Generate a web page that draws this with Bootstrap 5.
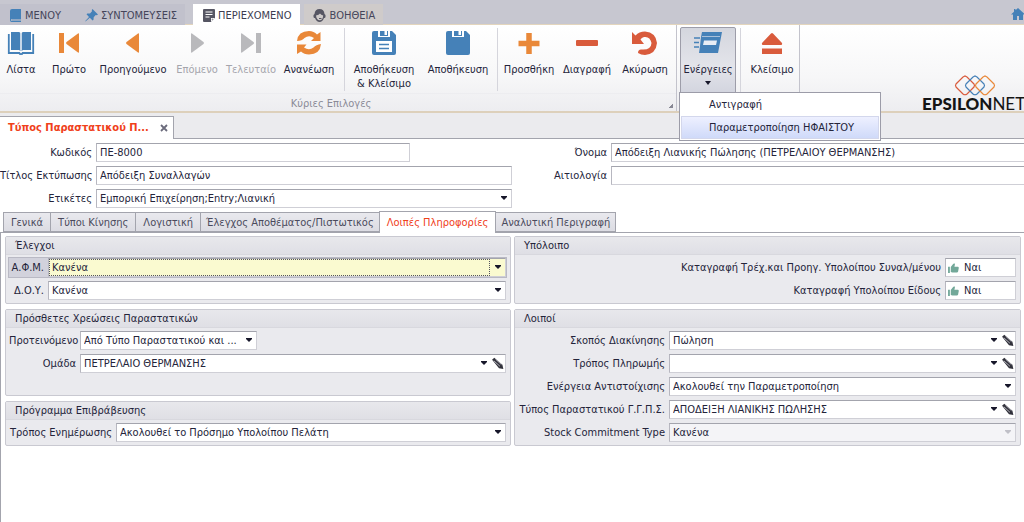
<!DOCTYPE html>
<html lang="el">
<head>
<meta charset="utf-8">
<meta name="viewport" content="width=device-width, initial-scale=1">
<title>Τύπος Παραστατικού</title>
<link href="https://cdn.jsdelivr.net/npm/bootstrap@5.3.0/dist/css/bootstrap.min.css" rel="stylesheet">
<script src="https://cdn.jsdelivr.net/npm/bootstrap@5.3.0/dist/js/bootstrap.bundle.min.js"></script>
<style>
:root { --ink:#24243a; --line:#a3a4ad; --soft:#cfcfd6; }
body { font-family:"DejaVu Sans Condensed","DejaVu Sans",sans-serif; font-size:11px; line-height:14px; color:var(--ink); background:#fff; overflow-x:hidden; }
button { font:inherit; color:inherit; }

/* top strip */
.topstrip { background:#c7c7d0; height:25px; border-bottom:1px solid #e3d5bd; }
.topstrip .nav-link { display:flex; align-items:center; height:21px; margin-top:4px; padding:2px 8px 0 9px; color:#45455a; gap:3px; border-radius:0; }
.topstrip .nav-link.active { background:#fff; height:22px; padding:1px 9px 0 10px; color:#3c3c50; }
.topstrip .warm { background:#cfcbca; }
.topstrip .cool { background:#c1c1cc; }
.home-link { height:24px; width:13px; padding-top:7px; overflow:hidden; }

/* ribbon */
.ribbon { height:88px; background:linear-gradient(#fff,#f7f7f8 60%,#ededf0); border-bottom:2px solid #ddd0bb; }
.ribbon-group { border-right:1px solid #c3c3cc; }
.ribbon-btn { background:none; border:0; padding:5px 0 0; display:flex; flex-direction:column; align-items:center; line-height:14px; white-space:nowrap; }
.ribbon-btn svg { width:28px; height:26px; margin-bottom:7px; flex:none; }
.ribbon-btn:disabled { color:#a5a5ac; }
.w-a { width:42px; } .w-b { width:54px; } .w-c { width:62px; } .w-d { width:74px; }
.ribbon-sep { width:1px; margin:3px 2px 2px; background:#d5d5dc; }
.ribbon-caption { height:18px; color:#8b8b97; border-top:1px solid #ededf0; text-align:center; line-height:19px; position:relative; padding-right:14px; }
.corner-mark { position:absolute; right:3px; bottom:3px; width:4px; height:4px; background:linear-gradient(135deg,transparent 50%,#888894 50%); }
.action-btn { width:56px; height:66px; margin:2px 0 0 3px; padding-top:2px; border:1px solid #9d9da9; border-radius:2px 2px 0 0; background:linear-gradient(#d4d6de,#e3e4ea 60%,#d3d5df); }
.caret { width:0; height:0; border:3px solid transparent; border-top:4px solid #17172a; border-bottom:0; margin-top:4px; }
.action-menu { top:67px; left:2px; min-width:202px; padding:1px; margin:0; border:1px solid #9c9ca8; border-radius:0; font-size:11px; background:#fff; }
.action-menu .dropdown-item { height:22px; padding:4px 12px 4px 28px; line-height:14px; color:var(--ink); }
.action-menu .dropdown-item.active { height:23px; background:linear-gradient(#eef0ff,#cfdaf9); border:1px solid #d3d7ec; padding-left:27px; }
.brand { width:102px; font:17px/14px Lato,sans-serif; color:#151515; white-space:nowrap; }
.brand b { font-weight:900; }
.brand svg { display:block; margin-left:31px; }

/* document tabs */
.docstrip { height:26px; background:#ebebee; border-bottom:1px solid var(--line); padding-top:3px; }
.doctab { width:174px; height:23px; background:#fff; border:1px solid var(--line); border-width:1px 1px 0 0; padding:0 3px 0 8px; color:#f0401a; font-weight:bold; }
.doctab button { border:0; background:none; padding:0; width:10px; line-height:1; }
.doctab svg { display:block; }

/* fields */
.field { display:flex; align-items:center; height:19px; }
.field > label { flex:none; text-align:right; padding-right:4px; white-space:nowrap; }
.box { flex:1 1 0; min-width:0; display:flex; align-items:center; height:19px; background:#fff; border:1px solid var(--soft); border-top-color:var(--line); border-left-color:#b7b7c0; }
.box input, .box select { flex:1 1 0; min-width:0; width:100%; height:17px; min-height:0; padding:0 3px; border:0; border-radius:0; font-size:11px; line-height:17px; color:var(--ink); background-color:transparent; box-shadow:none; }
.box select { background-image:url("data:image/svg+xml,%3Csvg xmlns='http://www.w3.org/2000/svg' viewBox='0 0 6 4'%3E%3Cpath d='M0 0h6v1L3 4 0 1z' fill='%2317172a'/%3E%3C/svg%3E"); background-size:6px 4px; background-position:right 4px top 6px; padding-right:16px; }
.box select:disabled { opacity:1; background-color:#f4f4f7; background-image:url("data:image/svg+xml,%3Csvg xmlns='http://www.w3.org/2000/svg' viewBox='0 0 6 4'%3E%3Cpath d='M0 0h6v1L3 4 0 1z' fill='%23c0c0c8'/%3E%3C/svg%3E"); }
.edit-btn { border:0; background:none; padding:0; width:14px; height:14px; flex:none; }
.edit-btn svg { display:block; }
.focus-row { background:#d2d2dc; outline:1px solid #b9b9c4; outline-offset:0; }
.focus-row .box { background:#fafad0; position:relative; }
.focus-row .box::before { content:""; position:absolute; inset:0 15px 0 0; border:1px dotted #55555f; pointer-events:none; }
.yesno { width:71px; height:19px; background:#fff; border:1px solid var(--soft); border-top-color:var(--line); border-left-color:#b7b7c0; padding:0 2px; display:flex; align-items:center; gap:5px; }

.head-form { padding:4px 0; }
.head-form .l1 { width:96px; } .head-form .l2 { width:99px; }
.stack4 { display:flex; flex-direction:column; gap:4px; }
.name-box { border-right:0; }
.code-field { width:80%; }

/* page tabs */
.pagetabs { padding-left:3px; height:21px; align-items:flex-end; border-bottom:1px solid var(--line); flex-wrap:nowrap; }
.pagetabs .nav-link { height:20px; padding:3px 7px 0; line-height:14px; color:#4a4a5c; border:1px solid var(--line); border-radius:0; margin:0 -1px 0 0; background:linear-gradient(#e9e9ee,#dcdce3); white-space:nowrap; }
.pagetabs .nav-link.tight { padding-left:5px; padding-right:5px; }
.pagetabs .nav-link.active { background:#fff; color:#f0401a; height:22px; border-bottom:0; margin-bottom:-1px; padding-top:4px; }
.page-body { padding:3px 3px 3px 4px; border-left:1px solid var(--line); }
.panels { display:grid; grid-template-columns:506fr 507fr; gap:3px; }
.stack5 { display:flex; flex-direction:column; gap:5px; }
.group { border:1px solid #c9c9d1; border-radius:2px; background:#eaeaee; }
.group h2 { font-size:11px; line-height:14px; height:18px; margin:0; padding:2px 9px; font-weight:normal; background:linear-gradient(#e8e8ec,#dfdfe5); border-bottom:1px solid #d8d8de; }
.group .rows { padding:3px 4px 3px 3px; display:flex; flex-direction:column; gap:4px; }
.k1 { width:39px; } .k2 { width:71px; } .k3 { width:107px; } .k4 { width:151px; }
.short-box { flex:none; width:177px; }
</style>
</head>
<body class="d-flex flex-column min-vh-100">
<svg class="d-none" aria-hidden="true">
  <symbol id="pencil" viewBox="0 0 12 12"><path d="M1 2.500 3 .8l7.500 6.400.9 3.800-4-.7z" fill="#30303a"/><path d="m2.600 3.500 5.600 5M4.200 2l5.400 5" stroke="#c9c9d0" stroke-width=".8"/></symbol>
  <symbol id="thumb" viewBox="0 0 12 11"><path d="M0 4h2v7H0z" fill="#72a899"/><path d="M3 4.500 5.600 1 7 .4l.6 1L7 4h4q1 .3.8 1.500L11 9.600q-.4.9-1.200.9H4.800L3 9.800z" fill="#72a899"/></symbol>
</svg>

<header>
  <nav class="topstrip d-flex">
    <a class="nav-link cool" href="#"><svg width="13" height="13" viewBox="0 0 13 13"><path d="M3 0h9v10H3q-1 .2-1 1t1 1h9v1H2.500Q1 13 1 11V2q0-2 2-2z" fill="#4581b8"/><path d="M3 11h9" stroke="#4581b8" stroke-width=".8"/></svg>ΜΕΝΟΥ</a>
    <a class="nav-link cool ps-3" href="#"><svg width="13" height="13" viewBox="0 0 13 13"><path d="M7.500 0 13 5.500 11.800 6.200 10.700 6 8.700 8.200 8.500 10.800 7.600 11.500 4.800 8.800.500 12.500.300 12 4 8 1.500 5.300 2.300 4.500 5 4.400 7 2.300 6.800 1z" fill="#4581b8"/></svg>ΣΥΝΤΟΜΕΥΣΕΙΣ</a>
    <a class="nav-link active ms-2 me-1" href="#" aria-current="page"><svg width="12" height="13" viewBox="0 0 12 13"><path d="M1 0h10q1 0 1 1v8l-4 4H1q-1 0-1-1V1q0-1 1-1z" fill="#565663"/><path d="M2.500 3h7M2.500 5.500h7M2.500 8h4" stroke="#fff" fill="none"/><path d="M8 13V9h4z" fill="#fff"/><path d="M8.800 11.300V9.800h1.600z" fill="#565663"/></svg>ΠΕΡΙΕΧΟΜΕΝΟ</a>
    <a class="nav-link warm" href="#"><svg width="13" height="13" viewBox="0 0 13 13"><path d="M6.500 0Q11 0 11.500 5q1.500.5 1 3-.3 1.300-1.500 1Q9.500 13 6.500 13T2 9Q.800 9.300.500 8q-.5-2.500 1-3Q2 0 6.500 0z" fill="#565663"/><path d="M3 6.500Q6 6 7 4.500q1 1.700 3.200 2Q10 11 6.700 11.300 3.500 11 3 6.500z" fill="#cfcbca"/><path d="M6 9.500h2.500" stroke="#565663"/></svg>ΒΟΗΘΕΙΑ</a>
    <a class="home-link ms-auto" href="#" aria-label="Αρχική"><svg width="14" height="13" viewBox="0 0 14 13"><path d="m7 0 7 6.500h-2V12H8V8H6v4H2V6.500H0L3 3.700V1h1.500v1.300z" fill="#4581b8"/></svg></a>
  </nav>

  <div class="ribbon d-flex">
    <section class="ribbon-group d-flex flex-column flex-shrink-0">
      <div class="d-flex flex-grow-1">
        <button class="ribbon-btn w-a"><svg viewBox="0 0 28 26"><path d="M4 2h8q1.300.2 1.500 1.500V21L12 20H4zM24 2h-8q-1.300.2-1.500 1.500V21l1.500-1h8z" fill="#4581b8"/><path d="M1.800 4v19h10.500q.2 1.200 1.700 1.200t1.700-1.200h10.500V4" fill="none" stroke="#4581b8" stroke-width="1.800"/><path d="M14 3v17" stroke="#dfe9f3" stroke-width="1.200"/></svg>Λίστα</button>
        <button class="ribbon-btn w-b"><svg viewBox="0 0 28 26"><path d="M4 3h5v20H4zM24 4v18q0 1-1 .5L11.500 14q-1-1 0-2L23 3.500q1-.5 1 .5z" fill="#e98839"/></svg>Πρώτο</button>
        <button class="ribbon-btn w-d"><svg viewBox="0 0 28 26"><path d="M20 4v18q0 1-1 .5L7.500 14q-1-1 0-2L19 3.500q1-.5 1 .5z" fill="#e98839"/></svg>Προηγούμενο</button>
        <button class="ribbon-btn w-b" disabled><svg viewBox="0 0 28 26"><path d="M8 4v18q0 1 1 .5L20.500 14q1-1 0-2L9 3.500Q8 3 8 4z" fill="#b9b9bc"/></svg>Επόμενο</button>
        <button class="ribbon-btn w-b" disabled><svg viewBox="0 0 28 26"><path d="M19 3h5v20h-5zM4 4v18q0 1 1 .5L16.500 14q1-1 0-2L5 3.500Q4 3 4 4z" fill="#b9b9bc"/></svg>Τελευταίο</button>
        <button class="ribbon-btn w-c"><svg viewBox="0 0 28 26"><path d="M2 11Q3 1 14 1q5 0 8 3.500L25.500 2v9H16l3-3q-5-3.500-9.500 0Q7 11 2 11z" fill="#e98839"/><path d="M26 14q-1 10.500-12 10.500-5 0-8-3L2 24v-9.500h9.500L9 17.500q5 3.500 9.500 0Q21 14.500 26 14z" fill="#e98839"/></svg>Ανανέωση</button>
        <div class="ribbon-sep ms-1"></div>
        <button class="ribbon-btn w-d"><svg viewBox="0 0 28 26"><path d="M4 1h18l4 4v18q0 2-2 2H4q-2 0-2-2V3q0-2 2-2z" fill="#4581b8"/><path d="M8 0h12v7H8z" fill="#fff"/><path d="M10 1h8v5h-8z" fill="#4581b8"/><path d="M14.500 1h2.500v4h-2.500zM6 11h16v11H6z" fill="#fff"/><path d="M9 14.500h10M9 18.500h10" stroke="#4581b8" stroke-width="1.500"/></svg>Αποθήκευση<br>&amp; Κλείσιμο</button>
        <button class="ribbon-btn w-d"><svg viewBox="0 0 28 26"><path d="M4 1h18l4 4v18q0 2-2 2H4q-2 0-2-2V3q0-2 2-2z" fill="#4581b8"/><path d="M8 0h12v7H8z" fill="#fff"/><path d="M10 1h8v5h-8z" fill="#4581b8"/><path d="M14.500 1h2.500v4h-2.500z" fill="#fff"/></svg>Αποθήκευση</button>
        <div class="ribbon-sep me-0"></div>
        <button class="ribbon-btn w-c"><svg viewBox="0 0 28 26"><path d="M14 3v21M3.500 13.500h21" stroke="#e98839" stroke-width="5.500"/></svg>Προσθήκη</button>
        <button class="ribbon-btn w-b"><svg viewBox="0 0 28 26"><rect x="3" y="10" width="22" height="6" rx="1" fill="#d95b3c"/></svg>Διαγραφή</button>
        <button class="ribbon-btn w-c"><svg viewBox="0 0 28 26"><path d="M1 2 4.500 5.500Q8 1.500 14 1.500q11 1 12 11.500-1 11-12 12-4 0-7-2 0-3.500 3-3.500 10 1 10.500-6.500Q19 6 13 7q-2.500.5-3.500 2.500L13 14H1z" fill="#d95b3c"/></svg>Ακύρωση</button>
      </div>
      <div class="ribbon-caption">Κύριες Επιλογές<span class="corner-mark"></span></div>
    </section>
    <div class="dropdown flex-shrink-0">
      <button class="ribbon-btn action-btn" aria-expanded="true" aria-haspopup="true"><svg viewBox="0 0 28 26"><path d="M8 2h20l-4 21H5l1-7 1-9z" fill="#4581b8"/><path d="M8 6.500h18" stroke="#a9c0da"/><path d="M10 10.500h13l-1 4.500H9z" fill="#e9eef5"/><path d="M0 8h6M0 12.500h5M0 17h5" stroke="#4581b8" stroke-width="1.500"/></svg>Ενέργειες<span class="caret"></span></button>
      <ul class="dropdown-menu action-menu show">
        <li><a class="dropdown-item" href="#">Αντιγραφή</a></li>
        <li><a class="dropdown-item active" href="#">Παραμετροποίηση ΗΦΑΙΣΤΟΥ</a></li>
      </ul>
    </div>
    <div class="ribbon-sep mx-1"></div>
    <section class="ribbon-group flex-shrink-0 d-flex">
      <button class="ribbon-btn w-b"><svg viewBox="0 0 28 26"><path d="M13 3.500q1-1 2 0l9 9.500q.5 2-1 2H5q-1.500 0-1-2zM4 18.500h20V24H4z" fill="#d95b3c"/></svg>Κλείσιμο</button>
    </section>
    <div class="brand ms-auto mt-auto flex-shrink-0"><svg width="44" height="22" viewBox="0 0 44 22" fill="none" stroke-width="1.200"><path d="m10 2 2-1 2 1 7 7q1 1.500 0 3l-7 7q-2 1.500-4 0l-7-7q-1-1.500 0-3z" stroke="#d95b3c"/><path d="m20 2 2-1 2 1 7 7q1 1.500 0 3l-7 7q-2 1.500-4 0l-7-7q-1-1.500 0-3z" stroke="#4581b8"/><path d="m30 2 2-1 2 1 7 7q1 1.500 0 3l-7 7q-2 1.500-4 0l-7-7q-1-1.500 0-3z" stroke="#e98839"/></svg><b>EPSILON</b>NET</div>
  </div>
</header>

<div class="docstrip">
  <div class="doctab d-flex align-items-center justify-content-between"><span>Τύπος Παραστατικού Π...</span><button aria-label="Κλείσιμο καρτέλας"><svg width="8" height="8" viewBox="0 0 8 8"><path d="m1 1 6 6M7 1 1 7" stroke="#6b6b7c" stroke-width="1.800"/></svg></button></div>
</div>

<main class="flex-grow-1 d-flex flex-column">
  <form class="flex-grow-1 d-flex flex-column">
    <div class="head-form row g-0">
      <div class="col-6 stack4">
        <div class="field code-field"><label class="l1" for="code">Κωδικός</label><div class="box"><input id="code" value="ΠΕ-8000"></div></div>
        <div class="field"><label class="l1" for="ptitle">Τίτλος Εκτύπωσης</label><div class="box"><input id="ptitle" value="Απόδειξη Συναλλαγών"></div></div>
        <div class="field"><label class="l1" for="tags">Ετικέτες</label><div class="box"><select class="form-select" id="tags"><option>Εμπορική Επιχείρηση;Entry;Λιανική</option></select></div></div>
      </div>
      <div class="col-6 stack4">
        <div class="field"><label class="l2" for="name">Όνομα</label><div class="box name-box"><input id="name" value="Απόδειξη Λιανικής Πώλησης (ΠΕΤΡΕΛΑΙΟΥ ΘΕΡΜΑΝΣΗΣ)"></div></div>
        <div class="field"><label class="l2" for="reason">Αιτιολογία</label><div class="box name-box"><input id="reason"></div></div>
      </div>
    </div>

    <nav class="nav pagetabs">
      <a class="nav-link" href="#">Γενικά</a>
      <a class="nav-link" href="#">Τύποι Κίνησης</a>
      <a class="nav-link" href="#">Λογιστική</a>
      <a class="nav-link tight" href="#">Έλεγχος Αποθέματος/Πιστωτικός</a>
      <a class="nav-link active" href="#" aria-current="page">Λοιπές Πληροφορίες</a>
      <a class="nav-link tight" href="#">Αναλυτική Περιγραφή</a>
    </nav>

    <div class="page-body flex-grow-1">
      <div class="panels">
        <div class="stack5">
          <section class="group"><h2>Έλεγχοι</h2>
            <div class="rows">
              <div class="field focus-row"><label class="k1" for="afm">Α.Φ.Μ.</label><div class="box"><select class="form-select" id="afm"><option>Κανένα</option></select></div></div>
              <div class="field"><label class="k1" for="doy">Δ.Ο.Υ.</label><div class="box"><select class="form-select" id="doy"><option>Κανένα</option></select></div></div>
            </div>
          </section>
          <section class="group flex-grow-1"><h2>Πρόσθετες Χρεώσεις Παραστατικών</h2>
            <div class="rows">
              <div class="field"><label class="k2" for="prop">Προτεινόμενο</label><div class="box short-box"><select class="form-select" id="prop"><option>Από Τύπο Παραστατικού και ...</option></select></div></div>
              <div class="field"><label class="k2" for="team">Ομάδα</label><div class="box"><select class="form-select" id="team"><option>ΠΕΤΡΕΛΑΙΟ ΘΕΡΜΑΝΣΗΣ</option></select><button type="button" class="edit-btn" aria-label="Επεξεργασία"><svg width="13" height="13"><use href="#pencil"/></svg></button></div></div>
            </div>
          </section>
          <section class="group"><h2>Πρόγραμμα Επιβράβευσης</h2>
            <div class="rows">
              <div class="field"><label class="k3" for="upd">Τρόπος Ενημέρωσης</label><div class="box"><select class="form-select" id="upd"><option>Ακολουθεί το Πρόσημο Υπολοίπου Πελάτη</option></select></div></div>
            </div>
          </section>
        </div>
        <div class="stack5">
          <section class="group"><h2>Υπόλοιπο</h2>
            <div class="rows">
              <div class="field justify-content-end"><label for="bal1">Καταγραφή Τρέχ.και Προηγ. Υπολοίπου Συναλ/μένου</label><button type="button" id="bal1" class="yesno"><svg width="11" height="10"><use href="#thumb"/></svg>Ναι</button></div>
              <div class="field justify-content-end"><label for="bal2">Καταγραφή Υπολοίπου Είδους</label><button type="button" id="bal2" class="yesno"><svg width="11" height="10"><use href="#thumb"/></svg>Ναι</button></div>
            </div>
          </section>
          <section class="group"><h2>Λοιποί</h2>
            <div class="rows">
              <div class="field"><label class="k4" for="aim">Σκοπός Διακίνησης</label><div class="box"><select class="form-select" id="aim"><option>Πώληση</option></select><button type="button" class="edit-btn" aria-label="Επεξεργασία"><svg width="13" height="13"><use href="#pencil"/></svg></button></div></div>
              <div class="field"><label class="k4" for="pay">Τρόπος Πληρωμής</label><div class="box"><select class="form-select" id="pay"><option></option></select><button type="button" class="edit-btn" aria-label="Επεξεργασία"><svg width="13" height="13"><use href="#pencil"/></svg></button></div></div>
              <div class="field"><label class="k4" for="match">Ενέργεια Αντιστοίχισης</label><div class="box"><select class="form-select" id="match"><option>Ακολουθεί την Παραμετροποίηση</option></select></div></div>
              <div class="field"><label class="k4" for="ggps">Τύπος Παραστατικού Γ.Γ.Π.Σ.</label><div class="box"><select class="form-select" id="ggps"><option>ΑΠΟΔΕΙΞΗ ΛΙΑΝΙΚΗΣ ΠΩΛΗΣΗΣ</option></select><button type="button" class="edit-btn" aria-label="Επεξεργασία"><svg width="13" height="13"><use href="#pencil"/></svg></button></div></div>
              <div class="field"><label class="k4" for="stock">Stock Commitment Type</label><div class="box"><select class="form-select" id="stock" disabled><option>Κανένα</option></select></div></div>
            </div>
          </section>
        </div>
      </div>
    </div>
  </form>
</main>
</body>
</html>
